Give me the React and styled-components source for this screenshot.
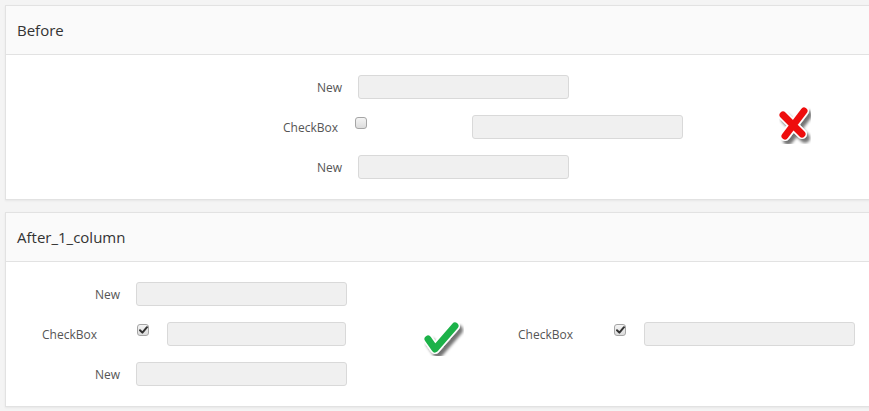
import React from "react"
import styled, { createGlobalStyle } from "styled-components"

const GlobalStyle = createGlobalStyle`
  html, body {
    margin: 0;
    padding: 0;
    background: #f4f4f4;
    overflow: hidden;
  }
  body {
    font-family: "Open Sans", "Liberation Sans", sans-serif;
    color: #555;
  }
`

const Page = styled.div`
  padding: 5px 0 0 5px;
`

const Panel = styled.section`
  margin-right: -20px;
  margin-bottom: 12px;
  background: #fff;
  border: 1px solid #e2e2e2;
  box-shadow: 0 1px 2px rgba(0, 0, 0, 0.06);
`

const PanelHeader = styled.header`
  height: 48px;
  display: flex;
  align-items: center;
  padding-left: 11px;
  background: #fafafa;
  border-bottom: 1px solid #e2e2e2;
  font-size: 15px;
  color: #333;
`

const PanelBody = styled.div`
  display: flex;
  align-items: flex-start;
  padding: 20px 0 20px ${p => p.$left}px;
`

const Form = styled.div`
  display: flex;
  flex-direction: column;
  gap: 16px;
`

const Row = styled.div`
  display: flex;
  align-items: center;
  height: 24px;
`

const Label = styled.label`
  width: ${p => p.$w}px;
  margin-right: ${p => p.$gap}px;
  text-align: right;
  font-size: 12px;
  color: #555;
  white-space: nowrap;
`

const Input = styled.input`
  box-sizing: border-box;
  width: ${p => p.$w || 211}px;
  height: 24px;
  margin-left: ${p => p.$ml || 0}px;
  background: #f0f0f0;
  border: 1px solid #d9d9d9;
  border-radius: 3px;
  padding: 0 6px;
  font: inherit;
  outline: none;
`

const Box = styled.span`
  box-sizing: border-box;
  display: inline-flex;
  align-items: center;
  justify-content: center;
  width: 12px;
  height: 12px;
  margin-top: -8px;
  border: 1px solid #a5a5a5;
  border-radius: 3px;
  background: linear-gradient(#f4f4f4, #dcdcdc);
  flex: none;
`

const Mark = styled.div`
  flex: none;
  margin-left: ${p => p.$ml}px;
  margin-top: ${p => p.$mt}px;
  line-height: 0;
`

const SideRow = styled(Row)`
  margin-top: 40px;
  margin-left: 48px;
`

const CheckBox = ({ checked }) => (
  <Box>
    {checked && (
      <svg width="9" height="8" viewBox="0 0 9 8">
        <path d="M1 4.2 L3.4 6.6 L8 1.2" fill="none" stroke="#333" strokeWidth="2" strokeLinecap="round" strokeLinejoin="round" />
      </svg>
    )}
  </Box>
)

const RedCross = () => (
  <svg width="40" height="40" viewBox="0 0 40 40">
    <defs>
      <filter id="xs" x="-30%" y="-30%" width="160%" height="160%">
        <feGaussianBlur in="SourceAlpha" stdDeviation="1.6" />
        <feOffset dx="3" dy="4" result="b" />
        <feComponentTransfer><feFuncA type="linear" slope="0.55" /></feComponentTransfer>
        <feMerge><feMergeNode /><feMergeNode in="SourceGraphic" /></feMerge>
      </filter>
    </defs>
    <g filter="url(#xs)">
      <path d="M5 9 L24 28 M26 5 L7 30" stroke="#fff" strokeWidth="10" strokeLinecap="round" />
      <path d="M5 9 L24 28 M26 5 L7 30" stroke="#ee1111" strokeWidth="7" strokeLinecap="round" />
    </g>
  </svg>
)

const GreenCheck = () => (
  <svg width="46" height="42" viewBox="0 0 46 42">
    <defs>
      <filter id="cs" x="-30%" y="-30%" width="160%" height="160%">
        <feGaussianBlur in="SourceAlpha" stdDeviation="1.6" />
        <feOffset dx="3" dy="4" result="b" />
        <feComponentTransfer><feFuncA type="linear" slope="0.55" /></feComponentTransfer>
        <feMerge><feMergeNode /><feMergeNode in="SourceGraphic" /></feMerge>
      </filter>
    </defs>
    <g filter="url(#cs)">
      <path d="M4 19 L11 29 L31 6" fill="none" stroke="#fff" strokeWidth="10" strokeLinecap="round" strokeLinejoin="round" />
      <path d="M4 19 L11 29 L31 6" fill="none" stroke="#1fb24a" strokeWidth="7" strokeLinecap="round" strokeLinejoin="round" />
    </g>
  </svg>
)

export default function App() {
  return (
    <Page>
      <GlobalStyle />
      <Panel>
        <PanelHeader>Before</PanelHeader>
        <PanelBody $left={236}>
          <Form>
            <Row>
              <Label $w={100} $gap={16}>New</Label>
              <Input readOnly />
            </Row>
            <Row>
              <Label $w={96} $gap={17}>CheckBox</Label>
              <CheckBox />
              <Input readOnly $ml={105} />
            </Row>
            <Row>
              <Label $w={100} $gap={16}>New</Label>
              <Input readOnly />
            </Row>
          </Form>
          <Mark $ml={95} $mt={31}>
            <RedCross />
          </Mark>
        </PanelBody>
      </Panel>
      <Panel>
        <PanelHeader>After_1_column</PanelHeader>
        <PanelBody $left={14}>
          <Form>
            <Row>
              <Label $w={100} $gap={16}>New</Label>
              <Input readOnly />
            </Row>
            <Row>
              <Label $w={77} $gap={40}>CheckBox</Label>
              <CheckBox checked />
              <Input readOnly $ml={18} $w={179} />
            </Row>
            <Row>
              <Label $w={100} $gap={16}>New</Label>
              <Input readOnly />
            </Row>
          </Form>
          <Mark $ml={77} $mt={38}>
            <GreenCheck />
          </Mark>
          <SideRow>
            <Label $w={52} $gap={44}>CheckBox</Label>
            <CheckBox checked />
            <Input readOnly $ml={18} />
          </SideRow>
        </PanelBody>
      </Panel>
    </Page>
  )
}
